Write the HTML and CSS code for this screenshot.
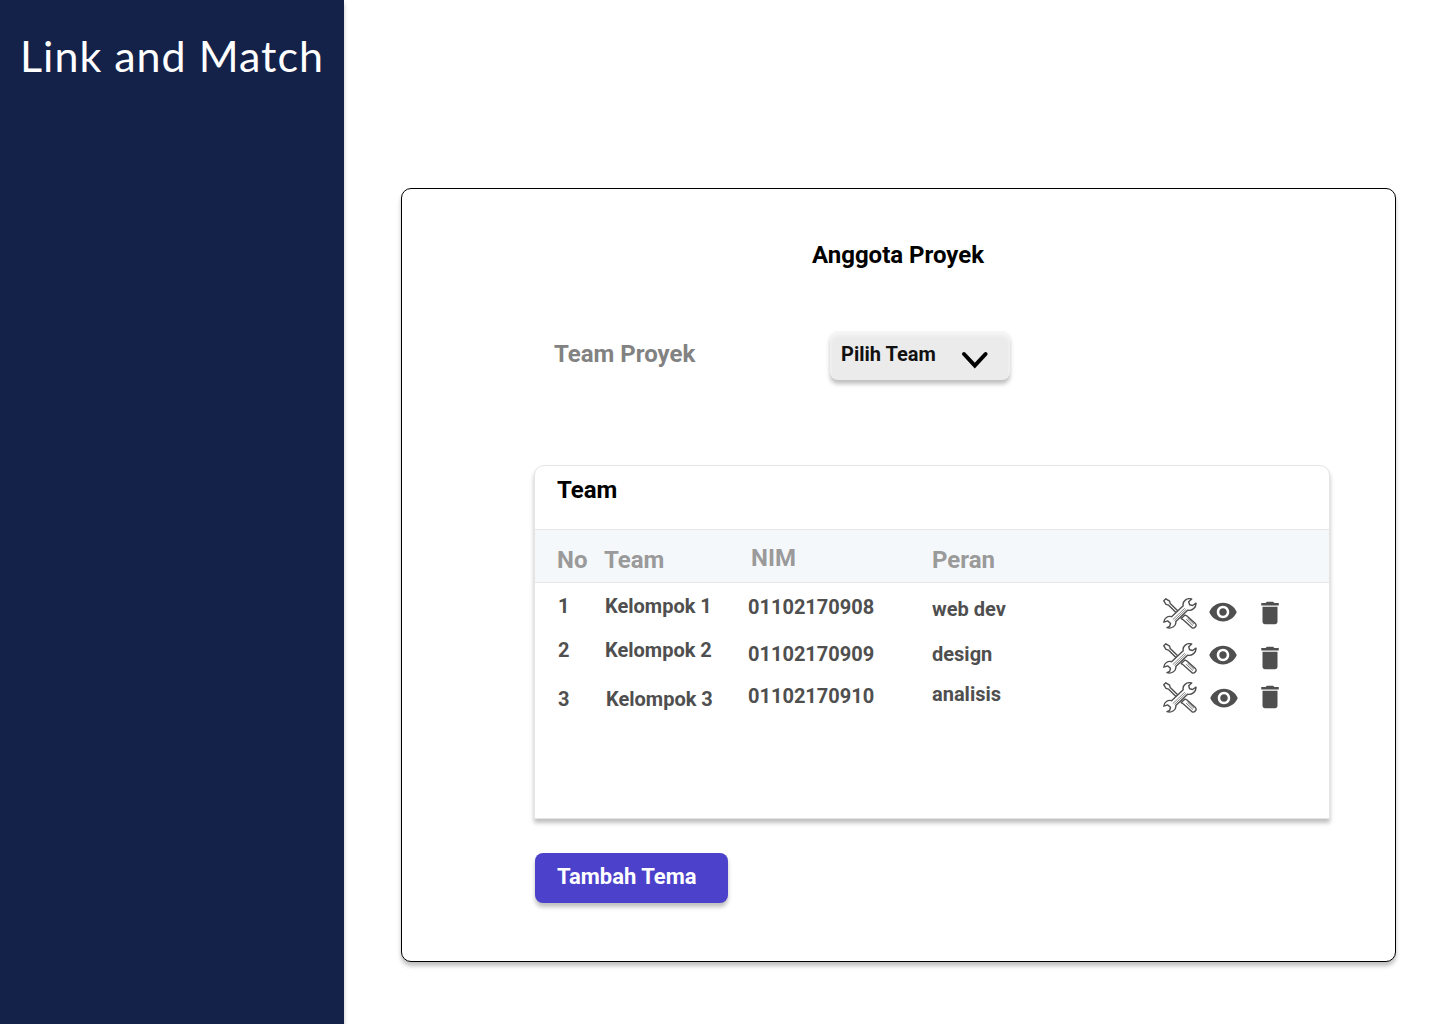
FILE: index.html
```html
<!DOCTYPE html>
<html lang="id">
<head>
<meta charset="utf-8">
<title>Link and Match</title>
<link rel="stylesheet" href="styles.css">
</head>
<body>
<svg class="defs" width="0" height="0">
  <symbol id="tools" viewBox="0 0 34 31">
    <g fill="#fff" stroke="#4f4f4f" stroke-width="1.4" stroke-linejoin="round">
      <path d="M.8 2.8 2.8.8 6.6 3.2 7.2 5.6 16.8 14.8 15 16.6 5.4 7.1 3 6.4Z"/>
      <path d="M18.2 20.6 22 17 24.2 18.2 32.4 25.6C34.4 28 31.2 31.2 28.8 29.6L20.4 22Z"/>
      <path d="M23.2 21.2 30 27.6M24.6 20.2 31 26.2" fill="none" stroke-width=".8"/>
      <path d="M28.7 1C24-.4 19.2 3.1 20.2 7.8L8.6 18.7C5 17.6 1 20 .8 24.2L4.6 22.9 7.5 25.3 6.7 28.3 4 29.7C8.6 31.2 13.6 27.8 12.8 23.4L24.6 12.2C29 13 33.4 9.6 33 5.1L29.6 7.5 26.6 6.7 25.7 3.8Z"/>
      <path d="M9.8 21.6 21.8 10.2M11.4 22.4 23.2 11.2" fill="none" stroke-width=".7"/>
    </g>
  </symbol>
  <symbol id="eye" viewBox="0 0 24 24"><path fill="#4f4f4f" d="M12 4.5C7 4.5 2.73 7.61 1 12c1.73 4.39 6 7.5 11 7.5s9.27-3.11 11-7.5c-1.73-4.39-6-7.5-11-7.5zM12 17c-2.76 0-5-2.24-5-5s2.24-5 5-5 5 2.24 5 5-2.24 5-5 5zm0-8c-1.66 0-3 1.34-3 3s1.34 3 3 3 3-1.34 3-3-1.34-3-3-3z"/></symbol>
  <symbol id="trash" viewBox="0 0 24 24"><path fill="#4f4f4f" d="M6 19c0 1.1.9 2 2 2h8c1.1 0 2-.9 2-2V7H6v12zM19 4h-3.5l-1-1h-5l-1 1H5v2h14V4z"/></symbol>
</svg>
<div class="page">
  <aside class="sidebar"><div class="brand">Link and Match</div></aside>
  <main class="main">
    <section class="card">
      <h1 class="title">Anggota Proyek</h1>
      <div class="field">
        <span class="field-label">Team Proyek</span>
        <button class="select"><span class="select-text">Pilih Team</span>
          <svg class="chevron" width="28" height="20" viewBox="0 0 28 20"><path d="M3 4 13.8 15.6 24.6 4" fill="none" stroke="#000" stroke-width="4" stroke-linecap="round"/></svg>
        </button>
      </div>
      <section class="panel">
        <h2 class="panel-title">Team</h2>
        <div class="thead">
          <span class="head-no">No</span><span class="head-team">Team</span><span class="col-nim raised">NIM</span><span class="col-role">Peran</span>
        </div>
        <div class="tbody">
          <div class="col col-no no"><span>1</span><span>2</span><span>3</span></div>
          <div class="col col-team team"><span>Kelompok 1</span><span>Kelompok 2</span><span class="shifted">Kelompok 3</span></div>
          <div class="col col-nim nim"><span>01102170908</span><span>01102170909</span><span>01102170910</span></div>
          <div class="col col-role role"><span>web dev</span><span>design</span><span>analisis</span></div>
          <div class="icons tools"><svg><use href="#tools"/></svg><svg><use href="#tools"/></svg><svg><use href="#tools"/></svg></div>
          <div class="icons eyes"><svg><use href="#eye"/></svg><svg><use href="#eye"/></svg><svg class="shifted"><use href="#eye"/></svg></div>
          <div class="icons bins"><svg><use href="#trash"/></svg><svg><use href="#trash"/></svg><svg><use href="#trash"/></svg></div>
        </div>
      </section>
      <button class="add">Tambah Tema</button>
    </section>
  </main>
</div>
</body>
</html>
```
FILE: styles.css
```css
* { box-sizing: border-box; }
body { margin: 0; background: #fff; font-family: Roboto, sans-serif; font-weight: 700; }
button { font: inherit; border: 0; text-align: left; }
.defs { display: block; }
.page { display: flex; height: 1024px; overflow: hidden; }
.sidebar { width: 344px; flex: none; background: #14224a; box-shadow: 0 4px 4px rgba(0,0,0,.25); padding: 29px 0 0 20px; }
.brand { color: #fff; font: 400 43px/54px Lato, sans-serif; letter-spacing: 1px; white-space: nowrap; }
.main { flex: 1; padding: 188px 44px 62px 57px; }
.card { height: 774px; border: 1px solid #000; border-radius: 10px; background: #fff; box-shadow: 0 4px 4px rgba(0,0,0,.25); padding: 52px 65px 0 132px; }
.title { margin: 0 0 0 278px; font-size: 24px; line-height: 28px; font-weight: 700; color: #000; white-space: nowrap; }
.field { display: flex; margin-top: 62px; padding-left: 20px; }
.field-label { width: 276px; padding-top: 9px; font-size: 24px; line-height: 28px; color: #828282; }
.select { display: flex; width: 180px; height: 49px; padding: 11px 0 0 11px; border-radius: 8px; background: #ebebeb; box-shadow: 0 4px 4px rgba(0,0,0,.25), inset 0 4px 4px rgba(255,255,255,.6); }
.select-text { width: 120px; font-size: 20px; line-height: 24px; color: #111; }
.chevron { margin-top: 8px; }
.panel { width: 796px; height: 354px; margin-top: 85px; border: 1px solid #e5e5e5; border-radius: 10px 10px 0 0; background: #fff; box-shadow: 0 4px 4px rgba(0,0,0,.25); }
.panel-title { margin: 0; height: 63px; padding: 10px 0 0 22px; font-size: 24px; line-height: 28px; font-weight: 700; color: #000; }
.thead { display: flex; height: 54px; padding: 16px 0 0 22px; background: #f5f8fb; border: solid #e5e7e9; border-width: 1px 0; font-size: 24px; line-height: 28px; color: #9a9a9a; }
.head-no { width: 47px; }
.head-team { width: 144px; }
.raised { margin-top: -2px; padding-left: 3px; }
.tbody { display: flex; padding-left: 22px; }
.col-no { width: 48px; }
.col-team { width: 143px; }
.col-nim { width: 184px; }
.col-role { width: 231px; }
.col { display: flex; flex-direction: column; font-size: 20px; line-height: 24px; color: #4f4f4f; }
.no, .team { padding-top: 11px; gap: 20px; }
.no { padding-left: 1px; }
.no :last-child, .team :last-child { margin-top: 5px; }
.shifted { margin-left: 1px; }
.nim { padding-top: 12px; gap: 23px; }
.nim :last-child { margin-top: -5px; }
.role { padding-top: 14px; gap: 21px; }
.role :last-child { margin-top: -5px; }
.icons { display: flex; flex-direction: column; }
.icons svg { width: 30px; height: 30px; }
.icons.tools svg { width: 34px; height: 31px; }
.tools { width: 45px; padding-top: 15px; gap: 14px; }
.tools :last-child { margin-top: -6px; }
.eyes { width: 47px; padding-top: 14px; gap: 13px; }
.bins { padding-top: 15px; gap: 15px; }
.bins :last-child { margin-top: -6px; }
.add { display: block; width: 193px; height: 50px; margin: 34px 0 0 1px; padding: 0 0 3px 22px; border-radius: 8px; background: #4b41cb; box-shadow: 0 4px 4px rgba(0,0,0,.25); color: #fff; font-size: 22px; line-height: 26px; }
```
